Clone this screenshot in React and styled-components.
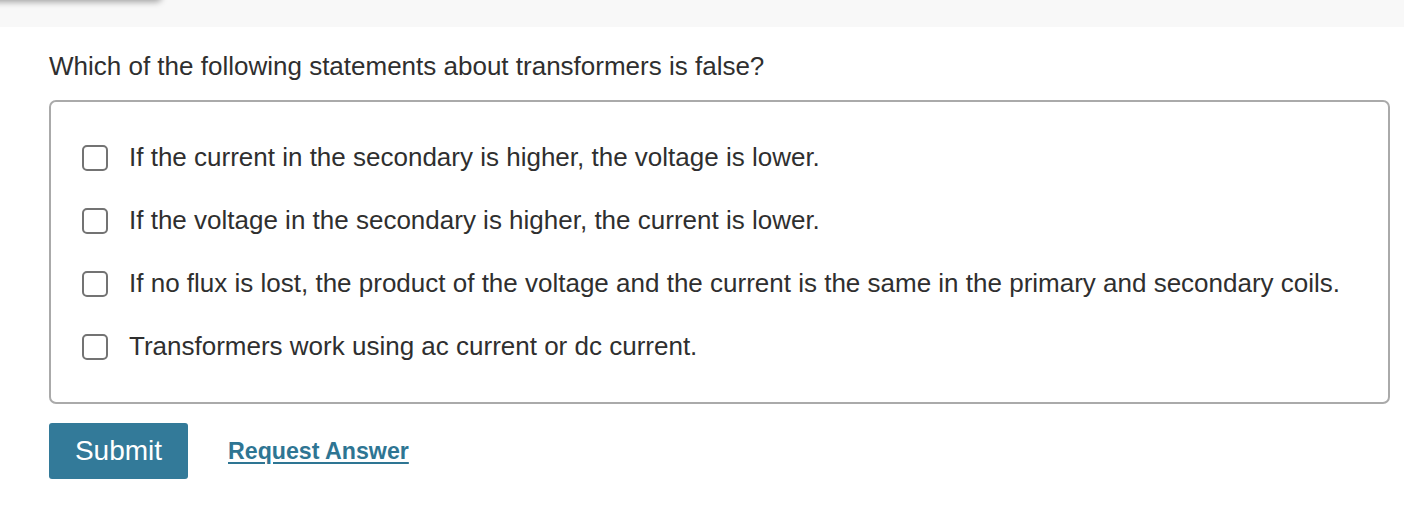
import React from "react";
import styled, { createGlobalStyle } from "styled-components";

const GlobalStyle = createGlobalStyle`
  html, body {
    margin: 0;
    padding: 0;
    background: #ffffff;
    font-family: "Liberation Sans", Arial, Helvetica, sans-serif;
    color: #333333;
  }
`;

const TopBar = styled.div`
  position: relative;
  height: 27px;
  background: #f8f8f8;
  overflow: hidden;
`;

const TabShadow = styled.div`
  position: absolute;
  left: -10px;
  top: -20px;
  width: 172px;
  height: 20px;
  border-radius: 0 0 6px 0;
  box-shadow: 0 2px 6px rgba(0, 0, 0, 0.35);
  background: #f8f8f8;
`;

const Content = styled.div`
  padding: 0 14px 0 49px;
`;

const Question = styled.p`
  margin: 24px 0 0;
  font-size: 26px;
  line-height: 30px;
  color: #2f2f2f;
`;

const OptionsBox = styled.div`
  margin-top: 19px;
  border: 2px solid #aaaaaa;
  border-radius: 7px;
  padding: 34px 0 34px 31px;
  display: flex;
  flex-direction: column;
  gap: 20px;
`;

const Option = styled.label`
  display: flex;
  align-items: center;
  gap: 21px;
  height: 43px;
  font-size: 26px;
  color: #2f2f2f;
  cursor: pointer;
`;

const Box = styled.span`
  flex: none;
  width: 22px;
  height: 22px;
  border: 2px solid #737373;
  border-radius: 5px;
  background: #ffffff;
`;

const Actions = styled.div`
  display: flex;
  align-items: center;
  gap: 40px;
  margin-top: 19px;
`;

const SubmitButton = styled.button`
  width: 139px;
  height: 56px;
  border: none;
  border-radius: 3px;
  background: #337a99;
  color: #ffffff;
  font-family: "Liberation Sans", Arial, sans-serif;
  font-size: 28px;
  cursor: pointer;
`;

const RequestLink = styled.a`
  font-size: 23.2px;
  font-weight: bold;
  color: #2e7593;
  text-decoration: underline;
  text-underline-offset: 3px;
  cursor: pointer;
`;

const options = [
  "If the current in the secondary is higher, the voltage is lower.",
  "If the voltage in the secondary is higher, the current is lower.",
  "If no flux is lost, the product of the voltage and the current is the same in the primary and secondary coils.",
  "Transformers work using ac current or dc current.",
];

export default function App() {
  return (
    <>
      <GlobalStyle />
      <TopBar>
        <TabShadow />
      </TopBar>
      <Content>
        <Question>
          Which of the following statements about transformers is false?
        </Question>
        <OptionsBox>
          {options.map((text) => (
            <Option key={text}>
              <Box />
              {text}
            </Option>
          ))}
        </OptionsBox>
        <Actions>
          <SubmitButton>Submit</SubmitButton>
          <RequestLink>Request Answer</RequestLink>
        </Actions>
      </Content>
    </>
  );
}
